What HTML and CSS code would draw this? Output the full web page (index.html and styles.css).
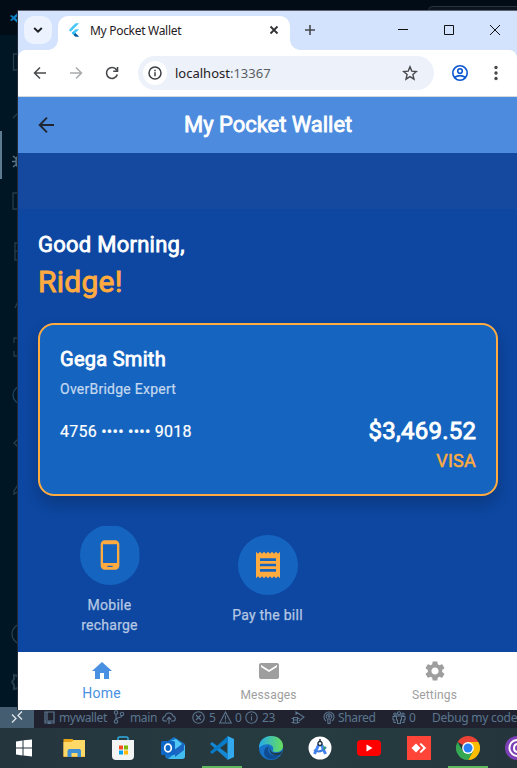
FILE: index.html
```html
<!DOCTYPE html>
<html lang="en">
<head>
<meta charset="utf-8">
<title>My Pocket Wallet</title>
<link rel="stylesheet" href="styles.css">
</head>
<body>
<div class="desktop">
  <div class="editor">
    <div class="editor-title">
      <svg class="code-mark" width="12" height="12" viewBox="0 0 24 24"><path d="M17 0l7 3v18l-7 3L7 15l-4 3-3-2 5-4-5-4 3-2 4 3zM17 7l-6 5 6 5z" fill="#0b7fc1"/></svg>
      <div class="command-box"></div>
    </div>
    <div class="activity">
      <svg width="18" height="672" viewBox="0 35 18 672" fill="none" stroke="#263d4c" stroke-width="1.3">
        <path d="M19 54h-5.500v16H19M13 118l5-5M19 193h-6v16h6M19 243h-4v17h4m-4-9h4M15 308l4-9M14 343v-5h5m-5 13v5h5v14M19 483l-5 8v3l5-3M19 438l-5 5 5 5"/>
        <circle cx="22" cy="395" r="9" stroke="#1e4460"/><circle cx="22" cy="634" r="10"/>
        <path d="M13 156l3 2.500M12 161.500h4M13 167l3-2.500M19 156q-3 0-3 5.500t3 5.500" stroke="#577486" stroke-width="1.500"/>
        <path d="M19 673l-2 3-3-1v4l-2 3 2 3v4l4-1 1 3" stroke-width="2"/>
        <path d="M1 131v48" stroke="#5c7b91" stroke-width="2"/>
      </svg>
    </div>
    <div class="status">
      <div class="remote"><svg width="12" height="12" viewBox="0 0 12 12" fill="none" stroke="#e0e7eb" stroke-width="1.3"><path d="M1 3.500l4 4-4 4M11 .5l-4 4 4 4"/></svg></div>
      <svg class="s-repo" width="13" height="13" viewBox="0 0 13 13" fill="none" stroke="currentColor" stroke-width="1.2"><path d="M2 11V1h9v9H2v2h2M7 12h4v-2M4 1v8M5 10v3l1-1 1 1v-3"/></svg>
      <span class="s-wallet">mywallet</span>
      <svg class="s-branch" width="12" height="14" viewBox="0 0 12 14" fill="none" stroke="currentColor" stroke-width="1.1"><circle cx="3" cy="2.500" r="1.700"/><circle cx="9" cy="4" r="1.700"/><circle cx="3" cy="11.500" r="1.700"/><path d="M3 4.200v5.500M9 5.700C9 8 4 7 3 9.500"/></svg>
      <span class="s-main">main</span>
      <svg class="s-cloud" width="14" height="12" viewBox="0 0 14 12" fill="none" stroke="currentColor" stroke-width="1.1"><path d="M5 9H3C0 9 0 5 3 4.500 4 0 10 0 11 4c3 .5 3 5 0 5H9M7 12V5.500M4.800 7.500L7 5.300l2.200 2.200"/></svg>
      <svg class="s-error" width="13" height="13" viewBox="0 0 13 13" fill="none" stroke="currentColor" stroke-width="1.1"><circle cx="6.500" cy="6.500" r="5.700"/><path d="M4 4l5 5m0-5L4 9"/></svg>
      <span class="s-five">5</span>
      <svg class="s-warn" width="13" height="13" viewBox="0 0 13 13" fill="none" stroke="currentColor" stroke-width="1.1"><path d="M6.500 1L12.300 12H.7zM6.500 4.500v4M6.500 9.500v1.200"/></svg>
      <span class="s-zero">0</span>
      <svg class="s-info" width="13" height="13" viewBox="0 0 13 13" fill="none" stroke="currentColor" stroke-width="1.1"><circle cx="6.500" cy="6.500" r="5.700"/><path d="M6.500 5.500v4M6.500 3v1.300"/></svg>
      <span class="s-23">23</span>
      <svg class="s-debug" width="14" height="13" viewBox="0 0 14 13" fill="none" stroke="currentColor" stroke-width="1.1"><path d="M5 4V1l8 5-5 4M2.500 6.500h4v5.500h-4zM.5 7.500h2M.5 11.500h2M6.500 7.500h2M6.500 11.500h2M2.500 9h4"/></svg>
      <svg class="s-share" width="12" height="13" viewBox="0 0 12 13" fill="none" stroke="currentColor" stroke-width="1.1"><path d="M3 10a5 5 0 1 1 6 0M4 7.500a2.700 2.700 0 1 1 4 0M5 12.500L4.700 8h2.600L7 12.500z"/><circle cx="6" cy="5.500" r=".8"/></svg>
      <span class="s-shared">Shared</span>
      <svg class="s-people" width="14" height="13" viewBox="0 0 14 13" fill="none" stroke="currentColor" stroke-width="1.1"><circle cx="7" cy="2.300" r="1.600"/><circle cx="3" cy="3.200" r="1.200"/><circle cx="11" cy="3.200" r="1.200"/><path d="M4.500 5h5v4H8.500v3.500h-3V9h-1zM4 5.500H1v3.300h1v2.700h2M10 5.500h3v3.300h-1v2.700h-2"/></svg>
      <span class="s-zero2">0</span>
      <span class="s-dbg">Debug my code</span>
    </div>
  </div>

  <div class="window">
    <div class="tabstrip">
      <div class="tab-search"><svg width="12" height="12" viewBox="0 0 12 12" fill="none" stroke="#1f2023" stroke-width="2"><path d="M2.200 4L6 7.700 9.800 4"/></svg></div>
      <div class="tab">
        <svg class="flutter" width="12" height="14" viewBox="0 0 12 14"><path d="M.8 6.900L7.500.2h3.700L2.700 8.700z" fill="#4ac7fa"/><path d="M7.500 6.300h3.700L7.400 10 5.500 8.200z" fill="#4ac7fa"/><path d="M3.600 10l1.900-1.900L7.400 10l-1.900 1.900z" fill="#1fbcfd"/><path d="M5.500 11.900L7.400 10l3.800 3.800H7.500z" fill="#01579b"/></svg>
        <span class="tab-name">My Pocket Wallet</span>
        <svg class="tab-x" width="10" height="10" viewBox="0 0 10 10" stroke="#303134" stroke-width="1.800"><path d="M1.500 1.500l7 7m0-7l-7 7"/></svg>
      </div>
      <svg class="plus" width="12" height="12" viewBox="0 0 12 12" stroke="#47494c" stroke-width="1.600"><path d="M6 1v10M1 6h10"/></svg>
      <div class="caption">
        <svg width="12" height="12" viewBox="0 0 12 12" stroke="#111" fill="none"><path d="M1 5.500h10"/></svg>
        <svg width="12" height="12" viewBox="0 0 12 12" stroke="#111" fill="none"><path d="M1.500 1.500h9v9h-9z"/></svg>
        <svg width="12" height="12" viewBox="0 0 12 12" stroke="#111" fill="none"><path d="M1 1l10 10m0-10L1 11"/></svg>
      </div>
    </div>
    <div class="toolbar">
      <svg class="nav-back" width="16" height="16" viewBox="0 0 16 16" fill="none" stroke="#47484b" stroke-width="1.500"><path d="M14 8H3M8 2.500L2.500 8 8 13.500"/></svg>
      <svg class="nav-fwd" width="16" height="16" viewBox="0 0 16 16" fill="none" stroke="#a9aaac" stroke-width="1.500"><path d="M2 8h11M8 2.500L13.500 8 8 13.500"/></svg>
      <svg class="nav-reload" width="16" height="16" viewBox="0 0 16 16" fill="none" stroke="#47484b" stroke-width="1.600"><path d="M13.300 9.500A5.500 5.500 0 1 1 12.500 4.800L13.500 6M13.500 2v4.300H9.200"/></svg>
      <div class="omnibox">
        <div class="site-info"><svg width="14" height="14" viewBox="0 0 14 14" fill="none" stroke="#3c4043" stroke-width="1.500"><circle cx="7" cy="7" r="6"/><path d="M7 6.200v4M7 3.700v1.600"/></svg></div>
        <span class="url">localhost<i>:13367</i></span>
        <svg class="star" width="16" height="16" viewBox="0 0 16 16" fill="none" stroke="#47484b" stroke-width="1.400"><path d="M8 1.800l1.800 4.300 4.600.4-3.500 3.100 1.100 4.600L8 11.700l-4 2.500 1.100-4.600-3.500-3.100 4.600-.4z"/></svg>
      </div>
      <svg class="profile" width="18" height="18" viewBox="0 0 18 18" fill="none" stroke="#0b57d0" stroke-width="1.600"><circle cx="9" cy="9" r="7.200"/><circle cx="9" cy="7" r="2.300"/><path d="M3.500 13.500q5.500-3.800 11 0"/></svg>
      <svg class="dots" width="4" height="16" viewBox="0 0 4 16" fill="#47484b"><circle cx="2" cy="2.500" r="1.700"/><circle cx="2" cy="8" r="1.700"/><circle cx="2" cy="13.500" r="1.700"/></svg>
    </div>
    <div class="appbar">
      <svg class="app-back" width="18" height="18" viewBox="0 0 18 18" fill="none" stroke="#202631" stroke-width="1.900"><path d="M16 9H2.500M9 1.700L1.700 9 9 16.300"/></svg>
      <h1>My Pocket Wallet</h1>
    </div>
    <main class="page">
      <div class="band"></div>
      <p class="greeting">Good Morning,</p>
      <p class="user">Ridge!</p>
      <section class="card">
        <h2>Gega Smith</h2>
        <p class="role">OverBridge Expert</p>
        <div class="card-row">
          <span class="number">4756 •••• •••• 9018</span>
          <span class="amount">$3,469.52</span>
        </div>
        <p class="brand"><span>VISA</span></p>
      </section>
      <div class="actions">
        <div class="action">
          <div class="disc clipped"><svg width="32" height="32" viewBox="0 0 24 24" fill="#ffab40"><path d="M16 1H8C6.340 1 5 2.340 5 4v16c0 1.660 1.340 3 3 3h8c1.660 0 3-1.340 3-3V4c0-1.660-1.340-3-3-3zm-2 20h-4v-1h4v1zm3.250-3H6.750V4h10.500v14z"/></svg></div>
          <span class="mobile">Mobile<br>recharge</span>
        </div>
        <div class="action">
          <div class="disc"><svg width="32" height="32" viewBox="0 0 24 24" fill="#ffab40"><path d="M18 17H6v-2h12v2zm0-4H6v-2h12v2zm0-4H6V7h12v2zM3 22l1.500-1.500L6 22l1.500-1.500L9 22l1.500-1.500L12 22l1.500-1.500L15 22l1.500-1.500L18 22l1.500-1.500L21 22V2l-1.500 1.500L18 2l-1.500 1.500L15 2l-1.500 1.500L12 2l-1.500 1.500L9 2 7.500 3.500 6 2 4.500 3.500 3 2v20z"/></svg></div>
          <span class="bill">Pay the bill</span>
        </div>
      </div>
    </main>
    <nav class="bottom">
      <div class="item active"><svg width="24" height="24" viewBox="0 0 24 24"><path d="M10 20v-6h4v6h5v-8h3L12 3 2 12h3v8z"/></svg><span>Home</span></div>
      <div class="item"><svg width="24" height="24" viewBox="0 0 24 24"><path d="M20 4H4c-1.100 0-2 .9-2 2v12c0 1.100.9 2 2 2h16c1.100 0 2-.9 2-2V6c0-1.100-.9-2-2-2zm0 4l-8 5-8-5V6l8 5 8-5v2z"/></svg><span>Messages</span></div>
      <div class="item"><svg width="24" height="24" viewBox="0 0 24 24"><path d="M19.140 12.940c.04-.3.060-.61.060-.94 0-.32-.02-.64-.07-.94l2.030-1.580c.18-.14.230-.41.120-.61l-1.920-3.320c-.12-.22-.37-.29-.59-.22l-2.390.96c-.5-.38-1.030-.7-1.620-.94l-.36-2.540c-.04-.24-.24-.41-.48-.41h-3.840c-.24 0-.43.170-.47.410l-.36 2.540c-.59.240-1.130.570-1.620.940l-2.390-.96c-.22-.08-.47 0-.59.220L2.740 8.870c-.12.210-.08.470.120.610l2.030 1.580c-.05.300-.09.630-.09.940s.02.640.070.940l-2.030 1.580c-.18.140-.23.410-.12.610l1.920 3.320c.12.220.37.290.59.220l2.390-.96c.5.380 1.030.7 1.620.940l.36 2.540c.05.240.24.410.48.410h3.840c.24 0 .44-.17.470-.41l.36-2.540c.59-.24 1.130-.56 1.620-.94l2.390.96c.22.080.47 0 .59-.22l1.920-3.320c.12-.22.070-.47-.12-.61l-2.010-1.580zM12 15.600c-1.980 0-3.600-1.620-3.600-3.600s1.620-3.600 3.600-3.600 3.600 1.620 3.600 3.600-1.620 3.600-3.600 3.600z"/></svg><span>Settings</span></div>
    </nav>
  </div>

  <footer class="taskbar">
    <div class="app"><svg class="start" width="24" height="24" viewBox="0 0 24 24" fill="#fff"><path d="M4 5.500l6.500-1V11.500H4zM11.500 4.300L20 3.500v8h-8.500zM4 12.500h6.500v7L4 18.500zM11.500 12.500H20v8l-8.500-1z"/></svg></div>
    <div class="app"><svg width="24" height="24" viewBox="0 0 24 24"><path d="M1.500 3h9l2 2H23v16H1.500z" fill="#e8a317"/><path d="M1.500 6H9l3-2h11v16.500H1.500z" fill="#ffd968"/><path d="M5.500 21v-6.500L7 13h11l1 1.500V21h-3.500v-4h-6v4z" fill="#3f8fd5"/></svg></div>
    <div class="app"><svg width="24" height="24" viewBox="0 0 24 24"><path d="M7 5V2.500C7 .5 8 1 12 1s5-.5 5 1.500V5" fill="none" stroke="#2faee5" stroke-width="1.500"/><path d="M1 4h22v16q0 4-4 4H5q-4 0-4-4z" fill="#f3f4f4"/><path fill="#f25022" d="M8 9.500h4v4H8z"/><path fill="#7fba00" d="M13 9.500h4v4h-4z"/><path fill="#00a4ef" d="M8 14.500h4v4H8z"/><path fill="#ffb900" d="M13 14.500h4v4h-4z"/></svg></div>
    <div class="app"><svg width="24" height="24" viewBox="0 0 24 24"><path d="M4 7l9-6 11 7v11q0 4-4 4H8q-4 0-4-4z" fill="#1673c6"/><path d="M7 6l8-3 6 5-9 7z" fill="#50c7f5"/><path d="M24 9v11q0 3-3 3H7z" fill="#41bdf0"/><path d="M14 14l9-7v7l-9 7z" fill="#1c65c2"/><rect y="5" width="14" height="14" rx="1.500" fill="#0f66c4"/><ellipse cx="7" cy="12" rx="3.300" ry="3.800" fill="none" stroke="#fff" stroke-width="1.700"/></svg></div>
    <div class="app running"><svg width="24" height="24" viewBox="0 0 24 24"><path d="M17.500 0L24 3v18l-6.500 3z" fill="#32a9ee"/><path d="M0 8l2-2 16 12v6z" fill="#1687d3"/><path d="M0 16l2 2L18 6V0z" fill="#087bc8"/></svg></div>
    <div class="app"><svg width="24" height="24" viewBox="0 0 24 24"><defs><linearGradient id="edge"><stop stop-color="#25a9e8"/><stop offset="1" stop-color="#67df5c"/></linearGradient></defs><circle cx="12" cy="12" r="12" fill="#1673c9"/><path d="M0 12C0 4 6 0 12 0c8 0 12 5 12 10 0 4-3 6-7 6-3 0-4-1-3-2 2-5-7-9-14-2z" fill="url(#edge)"/><path d="M10 10c-2 4 0 9 5 9 3 0 5-1 7-2-5 9-17 8-17-1 0-3 2-5 5-6z" fill="#104c91"/><path d="M11 11c0 4 2 6 6 6 3 0 5-1 6-2l-1 3c-7 3-13-1-11-7z" fill="#233840"/></svg></div>
    <div class="app"><svg width="24" height="24" viewBox="0 0 24 24"><circle cx="12" cy="12" r="11.500" fill="#fff"/><path d="M11 8L6.500 18M13 8l4.500 10" stroke="#4285f4" stroke-width="3"/><path d="M6 14q6 4 12-3" fill="none" stroke="#3d7ddd" stroke-width="2"/><path d="M15 9l3 3-2 2z" fill="#3ba55d"/><circle cx="12" cy="7.500" r="2" fill="#fff" stroke="#1f3040" stroke-width="1.300"/><path d="M12 3v3" stroke="#1f3040" stroke-width="1.500"/></svg></div>
    <div class="app"><svg width="24" height="24" viewBox="0 0 24 24"><rect y="4" width="24" height="16" rx="4" fill="#f00"/><path d="M9.500 8.500l6 3.500-6 3.500z" fill="#fff"/></svg></div>
    <div class="app"><svg width="24" height="24" viewBox="0 0 24 24"><path d="M0 0h24v24H0z" fill="#ff4438"/><path d="M4.500 12L9 7.500l4.500 4.500L9 16.500zM12.500 8l1.500-1 5.200 5-5.200 5-1.500-1 3.800-4z" fill="#fff"/></svg></div>
    <div class="app running"><svg width="24" height="24" viewBox="0 0 24 24"><path d="M12 12L1.600 6a12 12 0 0 1 20.800 0z" fill="#ea4335"/><path d="M12 12V6h10.400A12 12 0 0 1 12 24l5.200-9z" fill="#fbbc04"/><path d="M1.600 6A12 12 0 0 0 12 24l5.200-9L12 12l-5.200 3z" fill="#34a853"/><circle cx="12" cy="12" r="5.900" fill="#fff"/><circle cx="12" cy="12" r="4.500" fill="#2781f5"/></svg></div>
    <div class="app"><svg width="24" height="24" viewBox="0 0 24 24"><circle cx="12" cy="12" r="12" fill="#7d3fb5"/><path d="M13 4C7 4 4 8 4.500 13c.5 4 4 7 8.500 7M13 8c-3 0-4 2-4 4.500s2 3.500 4 3.500" fill="none" stroke="#fff" stroke-width="2"/></svg></div>
  </footer>
</div>
</body>
</html>
```

FILE: styles.css
```css
* { box-sizing: border-box; }
body { margin: 0; font-family: Roboto, "Liberation Sans", sans-serif; }
p, h1, h2 { margin: 0; }
svg { display: block; flex: none; }
.desktop { position: relative; width: 517px; height: 768px; overflow: hidden; display: flex; flex-direction: column; background: #011627; }

/* Editor behind the browser */
.editor { height: 728px; display: flex; flex-direction: column; }
.editor-title { height: 35px; background: #010c17; display: flex; justify-content: space-between; }
.code-mark { margin: 12px 0 0 10px; }
.command-box { width: 89px; height: 12px; margin-top: 6px; border: 1px solid #29323c; border-width: 1px 0 0 1px; border-radius: 5px 0 0; background: #0c1521; }
.activity { height: 672px; width: 18px; background: #011625; }
.status { height: 21px; display: flex; align-items: flex-end; background: #20232f; color: #5b7690; font: 12px/20px "Noto Sans", sans-serif; letter-spacing: -.35px; white-space: nowrap; }
.status > svg { margin-bottom: 4px; }
.status span { flex: none; }
.remote { width: 34px; height: 21px; flex: none; background: #455d70; padding: 4px 0 0 11px; }
.s-repo { margin-left: 9px; }
.s-wallet { margin-left: 3px; width: 48px; }
.s-branch { margin-left: 6px; }
.s-main { margin-left: 5px; width: 27px; }
.s-cloud { margin-left: 5px; }
.s-error { margin-left: 16px; }
.s-five { margin-left: 4px; width: 7px; }
.s-warn { margin-left: 3px; }
.s-zero { margin-left: 3px; width: 7px; }
.s-info { margin-left: 3px; }
.s-23 { margin-left: 4px; width: 14px; }
.s-debug { margin-left: 15px; }
.s-share { margin-left: 18px; }
.s-shared { margin-left: 3px; width: 38px; }
.s-people { margin-left: 16px; }
.s-zero2 { margin-left: 3px; width: 7px; }
.s-dbg { margin-left: 16px; letter-spacing: -.25px; }

/* Browser window */
.window { position: absolute; left: 18px; top: 10px; width: 499px; height: 700px; display: flex; flex-direction: column; background: #d3e3fd; border-top: 1px solid #5d626c; box-shadow: -1px 0 #222b35; overflow: hidden; }
.tabstrip { height: 39px; flex: none; display: flex; background: #d3e3fd; }
.tab-search { width: 28px; height: 28px; margin: 5px 0 0 6px; padding: 8px; background: #ecf2fe; border-radius: 10px; }
.tab { position: relative; width: 232px; height: 34px; margin: 5px 0 0 6px; background: #fff; border-radius: 10px 10px 0 0; display: flex; }
.tab::before, .tab::after { content: ""; position: absolute; bottom: 0; width: 10px; height: 10px; }
.tab::before { left: -10px; background: radial-gradient(circle at 0 0, transparent 9.5px, #fff 10px); }
.tab::after { right: -10px; background: radial-gradient(circle at 100% 0, transparent 9.5px, #fff 10px); }
.flutter { margin: 7px 0 0 10px; }
.tab-name { font: 12px/30px "Noto Sans", sans-serif; letter-spacing: -.3px; color: #1f2023; margin-left: 10px; width: 120px; white-space: nowrap; }
.tab-x { margin: 9px 0 0 59px; }
.plus { margin: 13px 0 0 14px; }
.caption { display: flex; gap: 34px; margin: 13px 0 0 81px; }
.toolbar { height: 47px; flex: none; display: flex; align-items: center; background: #fff; border-bottom: 1px solid #d5d8dc; border-radius: 8px 8px 0 0; }
.nav-back { margin-left: 14px; }
.nav-fwd { margin-left: 20px; }
.nav-reload { margin-left: 20px; }
.omnibox { width: 296px; height: 34px; margin-left: 18px; border-radius: 17px; background: #ecf1fa; display: flex; align-items: center; }
.site-info { width: 24px; height: 24px; margin-left: 5px; padding: 5px; border-radius: 50%; background: #fff; }
.url { margin-left: 8px; width: 120px; font: 13px/20px "Noto Sans", sans-serif; color: #1f2023; }
.url i { font-style: normal; color: #5b5e63; }
.star { margin-left: 107px; }
.profile { margin-left: 17px; }
.dots { margin-left: 25px; }

/* Wallet app */
.appbar { height: 56px; flex: none; display: flex; align-items: center; background: #4c8bde; }
.app-back { margin-left: 20px; }
h1 { margin-left: 128px; font-size: 22px; line-height: 28px; font-weight: 400; letter-spacing: -.04px; color: #fff; -webkit-text-stroke: .8px; white-space: nowrap; }
.page { height: 499px; flex: none; background: #0d47a1; color: #fff; padding: 0 19px 0 20px; }
.band { height: 56px; margin: 0 -19px 0 -20px; background: #15499f; }
.greeting { margin-top: 22px; font-size: 22px; line-height: 28px; letter-spacing: .25px; -webkit-text-stroke: .8px; }
.user { margin-top: 5px; font-size: 30px; line-height: 36px; letter-spacing: .25px; color: #ffab40; -webkit-text-stroke: .9px; }
.card { height: 173px; margin-top: 23px; padding: 20px; border: 2px solid #ffab40; border-radius: 16px; background: #1565c0; box-shadow: 0 8px 16px rgba(0,0,0,.2); }
h2 { font-size: 20px; line-height: 28px; font-weight: 400; letter-spacing: .28px; -webkit-text-stroke: .8px; }
.role { margin-top: 6px; font-size: 14px; line-height: 20px; letter-spacing: .25px; color: #c4d8ef; -webkit-text-stroke: .2px; }
.card-row { display: flex; justify-content: space-between; align-items: center; height: 30px; margin-top: 17px; }
.number { font-size: 16px; letter-spacing: .25px; -webkit-text-stroke: .2px; white-space: pre; }
.amount { font-size: 24px; letter-spacing: .25px; margin-right: -.25px; -webkit-text-stroke: .9px; }
.brand { text-align: right; font-size: 18px; line-height: 24px; margin-top: 3px; letter-spacing: .25px; color: #ffab40; -webkit-text-stroke: .5px; }
.actions { display: grid; grid-template-columns: 143px 173px; height: 149px; padding-top: 19px; }
.action { display: flex; flex-direction: column; align-items: center; justify-content: center; text-align: center; font-size: 14px; line-height: 20px; letter-spacing: .25px; color: #b6c8e3; -webkit-text-stroke: .25px; }
.disc { width: 60px; height: 60px; border-radius: 50%; background: #1565c0; display: grid; place-items: center; margin-bottom: 10px; }
.clipped { clip-path: inset(1px 0 0 0); }
.bottom { height: 58px; flex: none; display: grid; grid-template-columns: 167px 166px 166px; background: #fff; }
.item { display: flex; flex-direction: column; align-items: center; padding-top: 7px; color: #9e9e9e; font-size: 12px; line-height: 16px; letter-spacing: .15px; }
.item + .item { padding-left: 1px; }
.item svg { fill: currentColor; }
.item span { margin-top: 4px; }
.item.active { color: #4a90e2; font-size: 14px; letter-spacing: .25px; }
.item.active span { margin-top: 2px; }

/* Windows taskbar */
.taskbar { height: 40px; flex: none; display: flex; padding-left: .5px; background: linear-gradient(90deg, #25353e, #263c40 60%, #24363c); }
.app { width: 49.2px; height: 40px; flex: none; display: flex; justify-content: center; padding-top: 8px; }
.start { margin-right: 2px; }
.running { background: linear-gradient(#60b860, #60b860) center bottom / 40px 2px no-repeat; }
```
